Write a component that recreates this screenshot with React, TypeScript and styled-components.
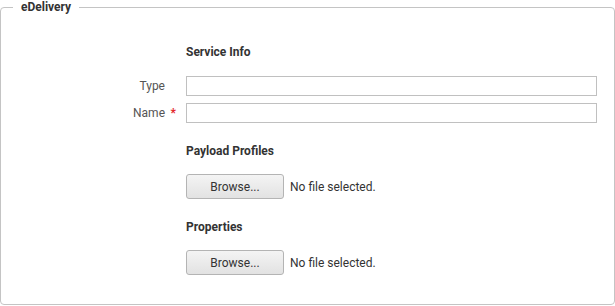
import React from "react";
import styled, { createGlobalStyle } from "styled-components";

const GlobalStyle = createGlobalStyle`
  html, body {
    margin: 0;
    padding: 0;
    background: #ffffff;
    font-family: Roboto, "Liberation Sans", Arial, sans-serif;
  }
`;

const Fieldset = styled.fieldset`
  box-sizing: border-box;
  width: 615px;
  height: 305px;
  margin: 0;
  padding: 0 17px 0 0;
  border: 1px solid #c4c4c4;
  border-radius: 4px;
`;

const Legend = styled.legend`
  margin-left: 12px;
  padding: 0 8px;
  font-size: 12px;
  font-weight: 700;
  line-height: 14px;
  color: #333333;
`;

const Form = styled.div`
  display: grid;
  grid-template-columns: 175px 1fr;
  column-gap: 10px;
  align-items: center;
  padding-top: 30px;
`;

const Heading = styled.div<{ $top: number }>`
  grid-column: 2;
  margin-top: ${(p) => p.$top}px;
  font-size: 12px;
  font-weight: 700;
  line-height: 16px;
  color: #333333;
`;

const Label = styled.label<{ $top: number }>`
  grid-column: 1;
  margin-top: ${(p) => p.$top}px;
  display: flex;
  justify-content: flex-end;
  font-size: 12px;
  line-height: 20px;
  color: #555555;
`;

const Required = styled.span<{ $show: boolean }>`
  display: inline-block;
  width: 11px;
  text-align: right;
  color: #e3262a;
  font-weight: 700;
  visibility: ${(p) => (p.$show ? "visible" : "hidden")};
`;

const TextInput = styled.input<{ $top: number }>`
  grid-column: 2;
  margin-top: ${(p) => p.$top}px;
  box-sizing: border-box;
  height: 20px;
  width: 411px;
  border: 1px solid #c0c0c0;
  border-radius: 0;
  padding: 0 4px;
  font-family: inherit;
  font-size: 12px;
  outline: none;
`;

const FileRow = styled.div<{ $top: number }>`
  grid-column: 2;
  margin-top: ${(p) => p.$top}px;
  display: flex;
  align-items: center;
  gap: 6px;
`;

const BrowseButton = styled.button`
  box-sizing: border-box;
  width: 98px;
  height: 25px;
  border: 1px solid #b4b4b4;
  border-radius: 3px;
  background: linear-gradient(#f4f4f4, #e2e2e2);
  font-family: inherit;
  font-size: 12px;
  color: #333333;
  padding: 0;
`;

const FileName = styled.span`
  font-size: 12px;
  color: #333333;
`;

const FilePicker: React.FC<{ top: number }> = ({ top }) => (
  <FileRow $top={top}>
    <BrowseButton type="button">Browse...</BrowseButton>
    <FileName>No file selected.</FileName>
  </FileRow>
);

export default function App() {
  return (
    <>
      <GlobalStyle />
      <Fieldset>
        <Legend>eDelivery</Legend>
        <Form>
          <Heading $top={0}>Service Info</Heading>
          <Label $top={16}>
            Type<Required $show={false}>*</Required>
          </Label>
          <TextInput $top={16} />
          <Label $top={7}>
            Name<Required $show={true}>*</Required>
          </Label>
          <TextInput $top={7} />
          <Heading $top={20}>Payload Profiles</Heading>
          <FilePicker top={15} />
          <Heading $top={20}>Properties</Heading>
          <FilePicker top={15} />
        </Form>
      </Fieldset>
    </>
  );
}
